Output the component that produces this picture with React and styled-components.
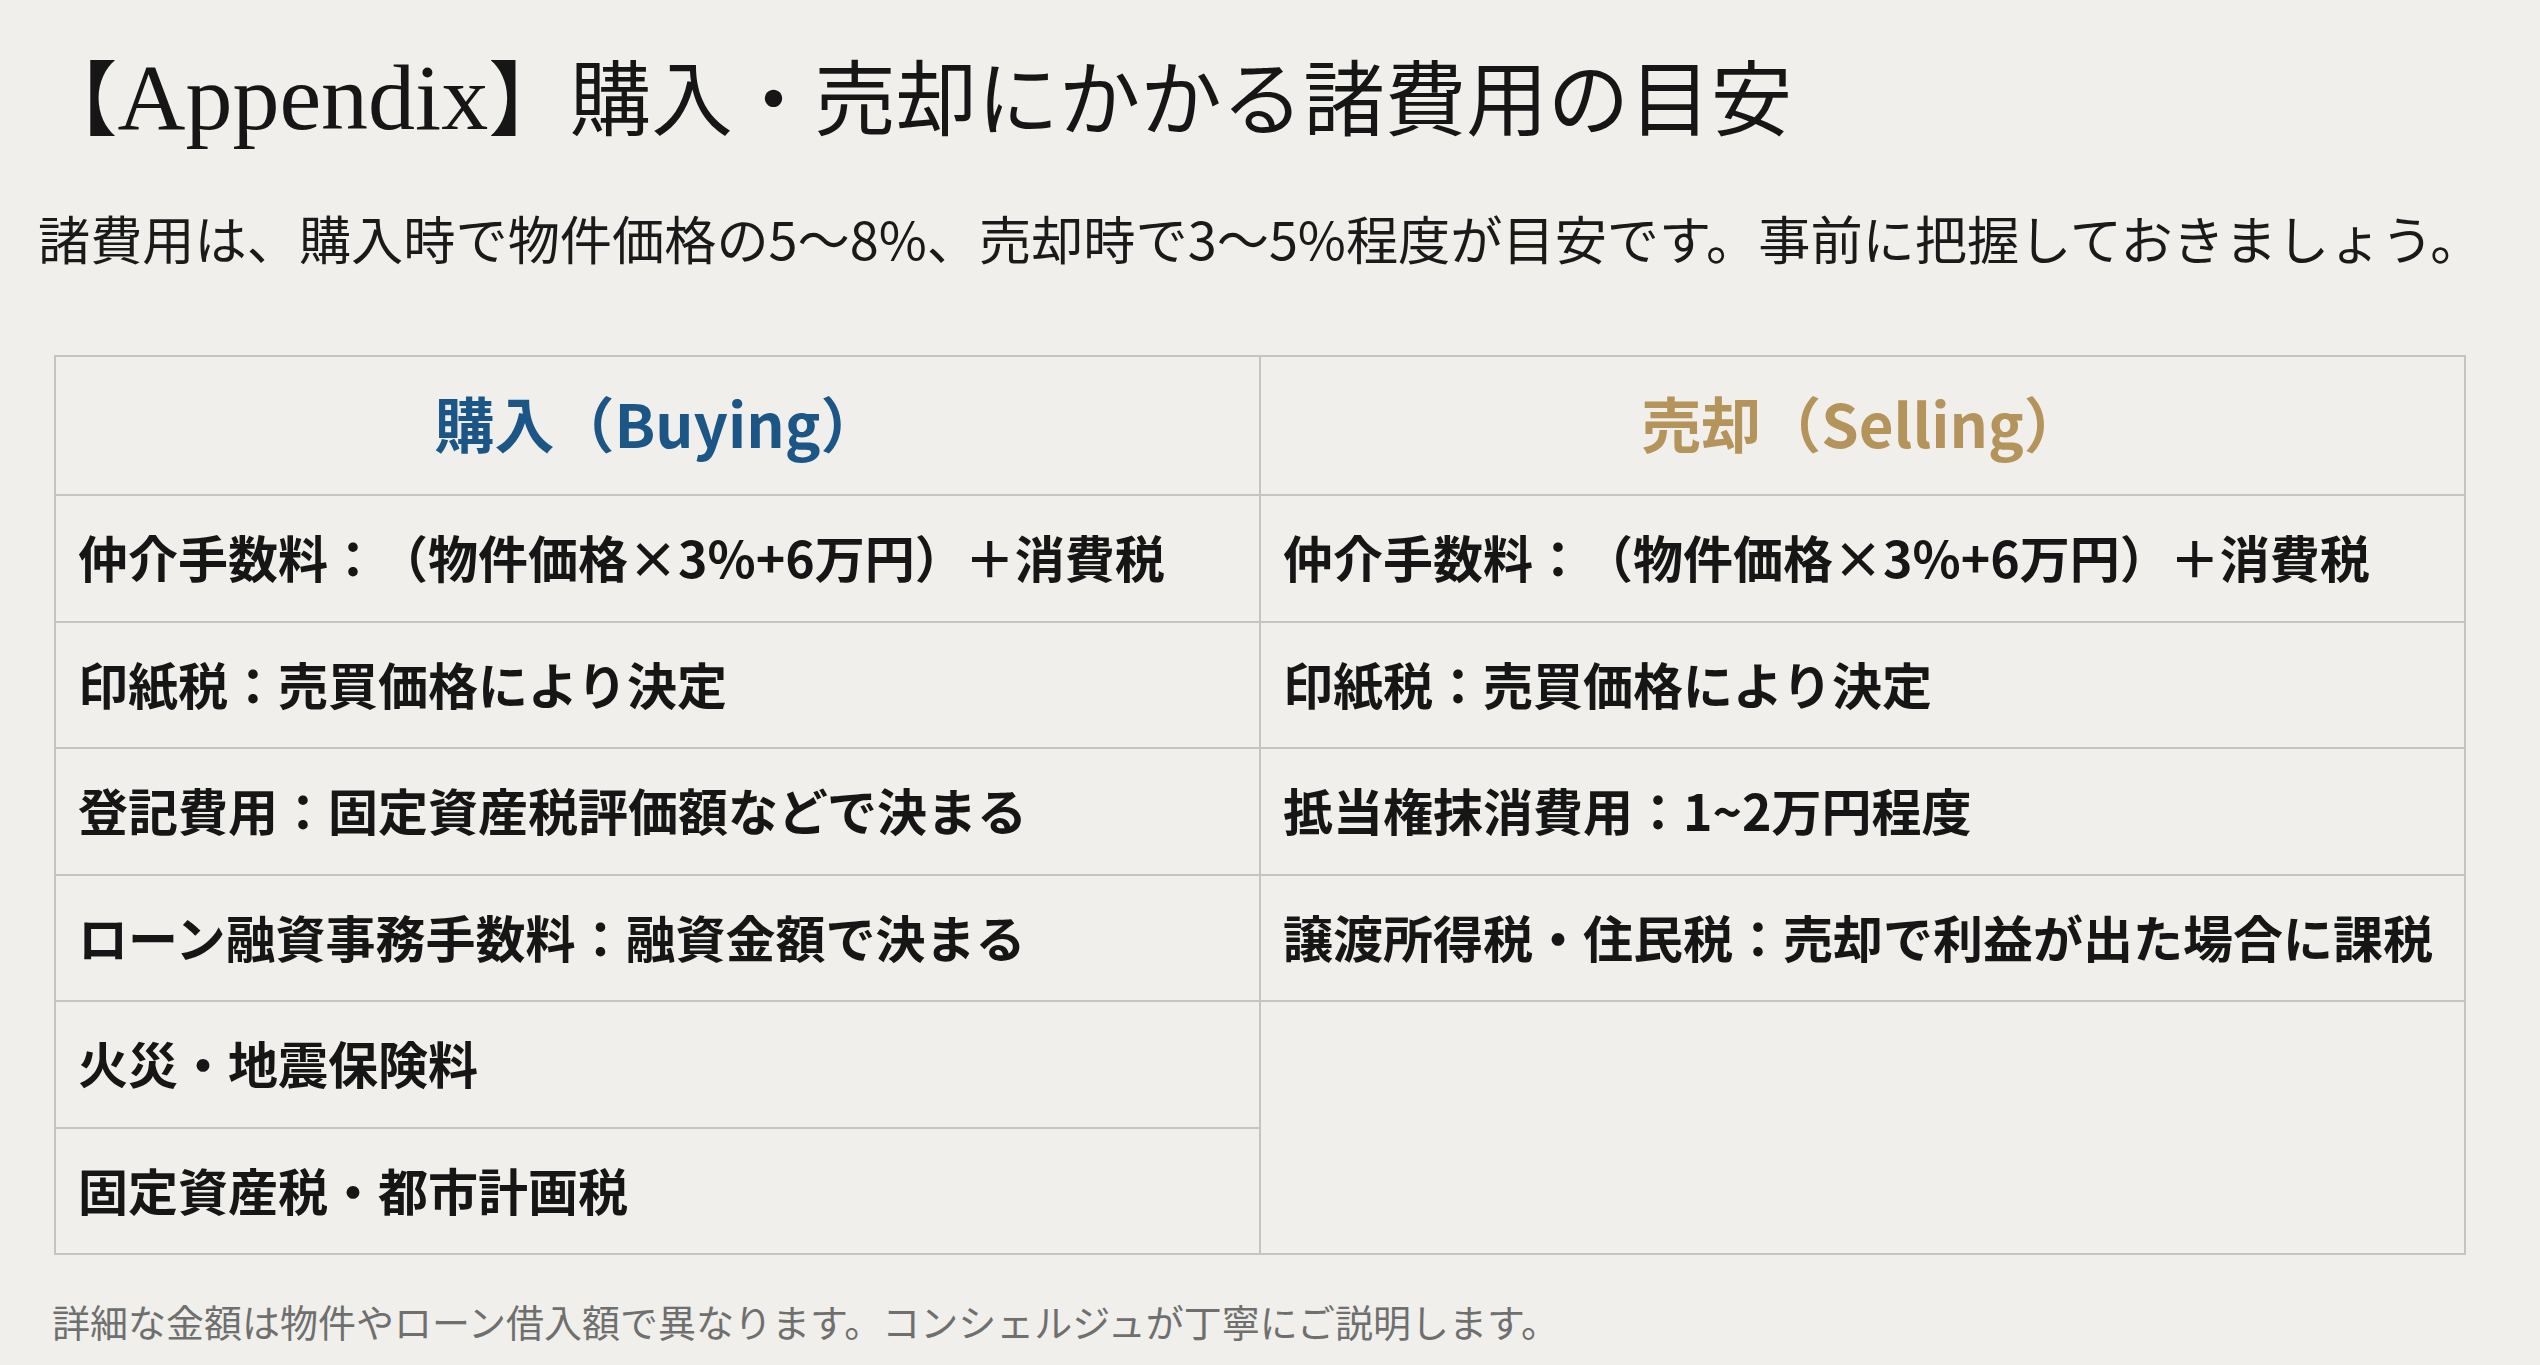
import React from 'react'
import styled, { createGlobalStyle } from 'styled-components'

const GlobalStyle = createGlobalStyle`
    html, body {
        margin: 0;
        padding: 0;
        background-color: #F0EFEB;
    }
    body {
        font-family: 'Noto Sans CJK JP', 'Noto Sans', sans-serif;
        text-spacing-trim: space-all;
    }
`;

const Page = styled.div`
    width: 2540px;
    height: 1365px;
    box-sizing: border-box;
    padding: 47px 74px 0 54px;
    display: flex;
    flex-direction: column;
    background-color: #F0EFEB;
    overflow: hidden;
`;

const Title = styled.h1`
    margin: 0 0 0 -18px;
    font-family: 'Liberation Serif', 'Noto Sans CJK JP', serif;
    font-weight: 400;
    font-size: 81.5px;
    line-height: 100px;
    color: #161616;
    white-space: nowrap;
`;

const TitleLatin = styled.span`
    font-size: 94px;
    line-height: 100px;
`;

const Lead = styled.p`
    margin: 53px 0 0 -16px;
    font-family: 'Noto Sans CJK JP', sans-serif;
    font-weight: 400;
    font-size: 52.2px;
    line-height: 64px;
    color: #1a1a1a;
    white-space: nowrap;
`;

const Table = styled.div`
    margin-top: 86px;
    width: 2412px;
    display: grid;
    grid-template-columns: 1fr 1fr;
    grid-template-rows: 139px repeat(6, 126.5px);
    border-top: 2px solid #C4C4C0;
    border-left: 2px solid #C4C4C0;
    box-sizing: border-box;
`;

const HeadCell = styled.div`
    display: flex;
    align-items: center;
    justify-content: center;
    padding-bottom: 8px;
    border-right: 2px solid #C4C4C0;
    border-bottom: 2px solid #C4C4C0;
    font-family: 'Noto Sans CJK JP', sans-serif;
    font-weight: 700;
    font-size: 60px;
    color: ${(props) => props.tone};
`;

const Cell = styled.div`
    display: flex;
    align-items: center;
    padding-left: 22px;
    padding-bottom: 4px;
    border-right: 2px solid #C4C4C0;
    border-bottom: 2px solid #C4C4C0;
    font-family: 'Noto Sans CJK JP', sans-serif;
    font-weight: 700;
    font-size: 50px;
    color: #161616;
    white-space: nowrap;
    grid-column: ${(props) => props.col};
    grid-row: ${(props) => props.row};
`;

const Note = styled.p`
    margin: 44px 0 0 -2px;
    font-family: 'Noto Sans CJK JP', sans-serif;
    font-weight: 400;
    font-size: 38px;
    line-height: 44px;
    color: #6f6f6f;
    white-space: nowrap;
`;

const buying = [
    '仲介手数料：（物件価格×3%+6万円）＋消費税',
    '印紙税：売買価格により決定',
    '登記費用：固定資産税評価額などで決まる',
    'ローン融資事務手数料：融資金額で決まる',
    '火災・地震保険料',
    '固定資産税・都市計画税',
]

const selling = [
    '仲介手数料：（物件価格×3%+6万円）＋消費税',
    '印紙税：売買価格により決定',
    '抵当権抹消費用：1~2万円程度',
    '譲渡所得税・住民税：売却で利益が出た場合に課税',
]

const App = () => {
  return (
    <>
        <GlobalStyle />
        <Page>
            <Title>【<TitleLatin>Appendix</TitleLatin>】購入・売却にかかる諸費用の目安</Title>
            <Lead>諸費用は、購入時で物件価格の5〜8%、売却時で3〜5%程度が目安です。事前に把握しておきましょう。</Lead>
            <Table>
                <HeadCell tone="#1B5686">購入（Buying）</HeadCell>
                <HeadCell tone="#B5945B">売却（Selling）</HeadCell>
                {buying.map((text, i) => (
                    <Cell key={'b' + i} col="1" row={i + 2}>{text}</Cell>
                ))}
                {selling.map((text, i) => (
                    <Cell key={'s' + i} col="2" row={i + 2}>{text}</Cell>
                ))}
                <Cell col="2" row="6 / span 2" />
            </Table>
            <Note>詳細な金額は物件やローン借入額で異なります。コンシェルジュが丁寧にご説明します。</Note>
        </Page>
    </>
  )
}

export default App
